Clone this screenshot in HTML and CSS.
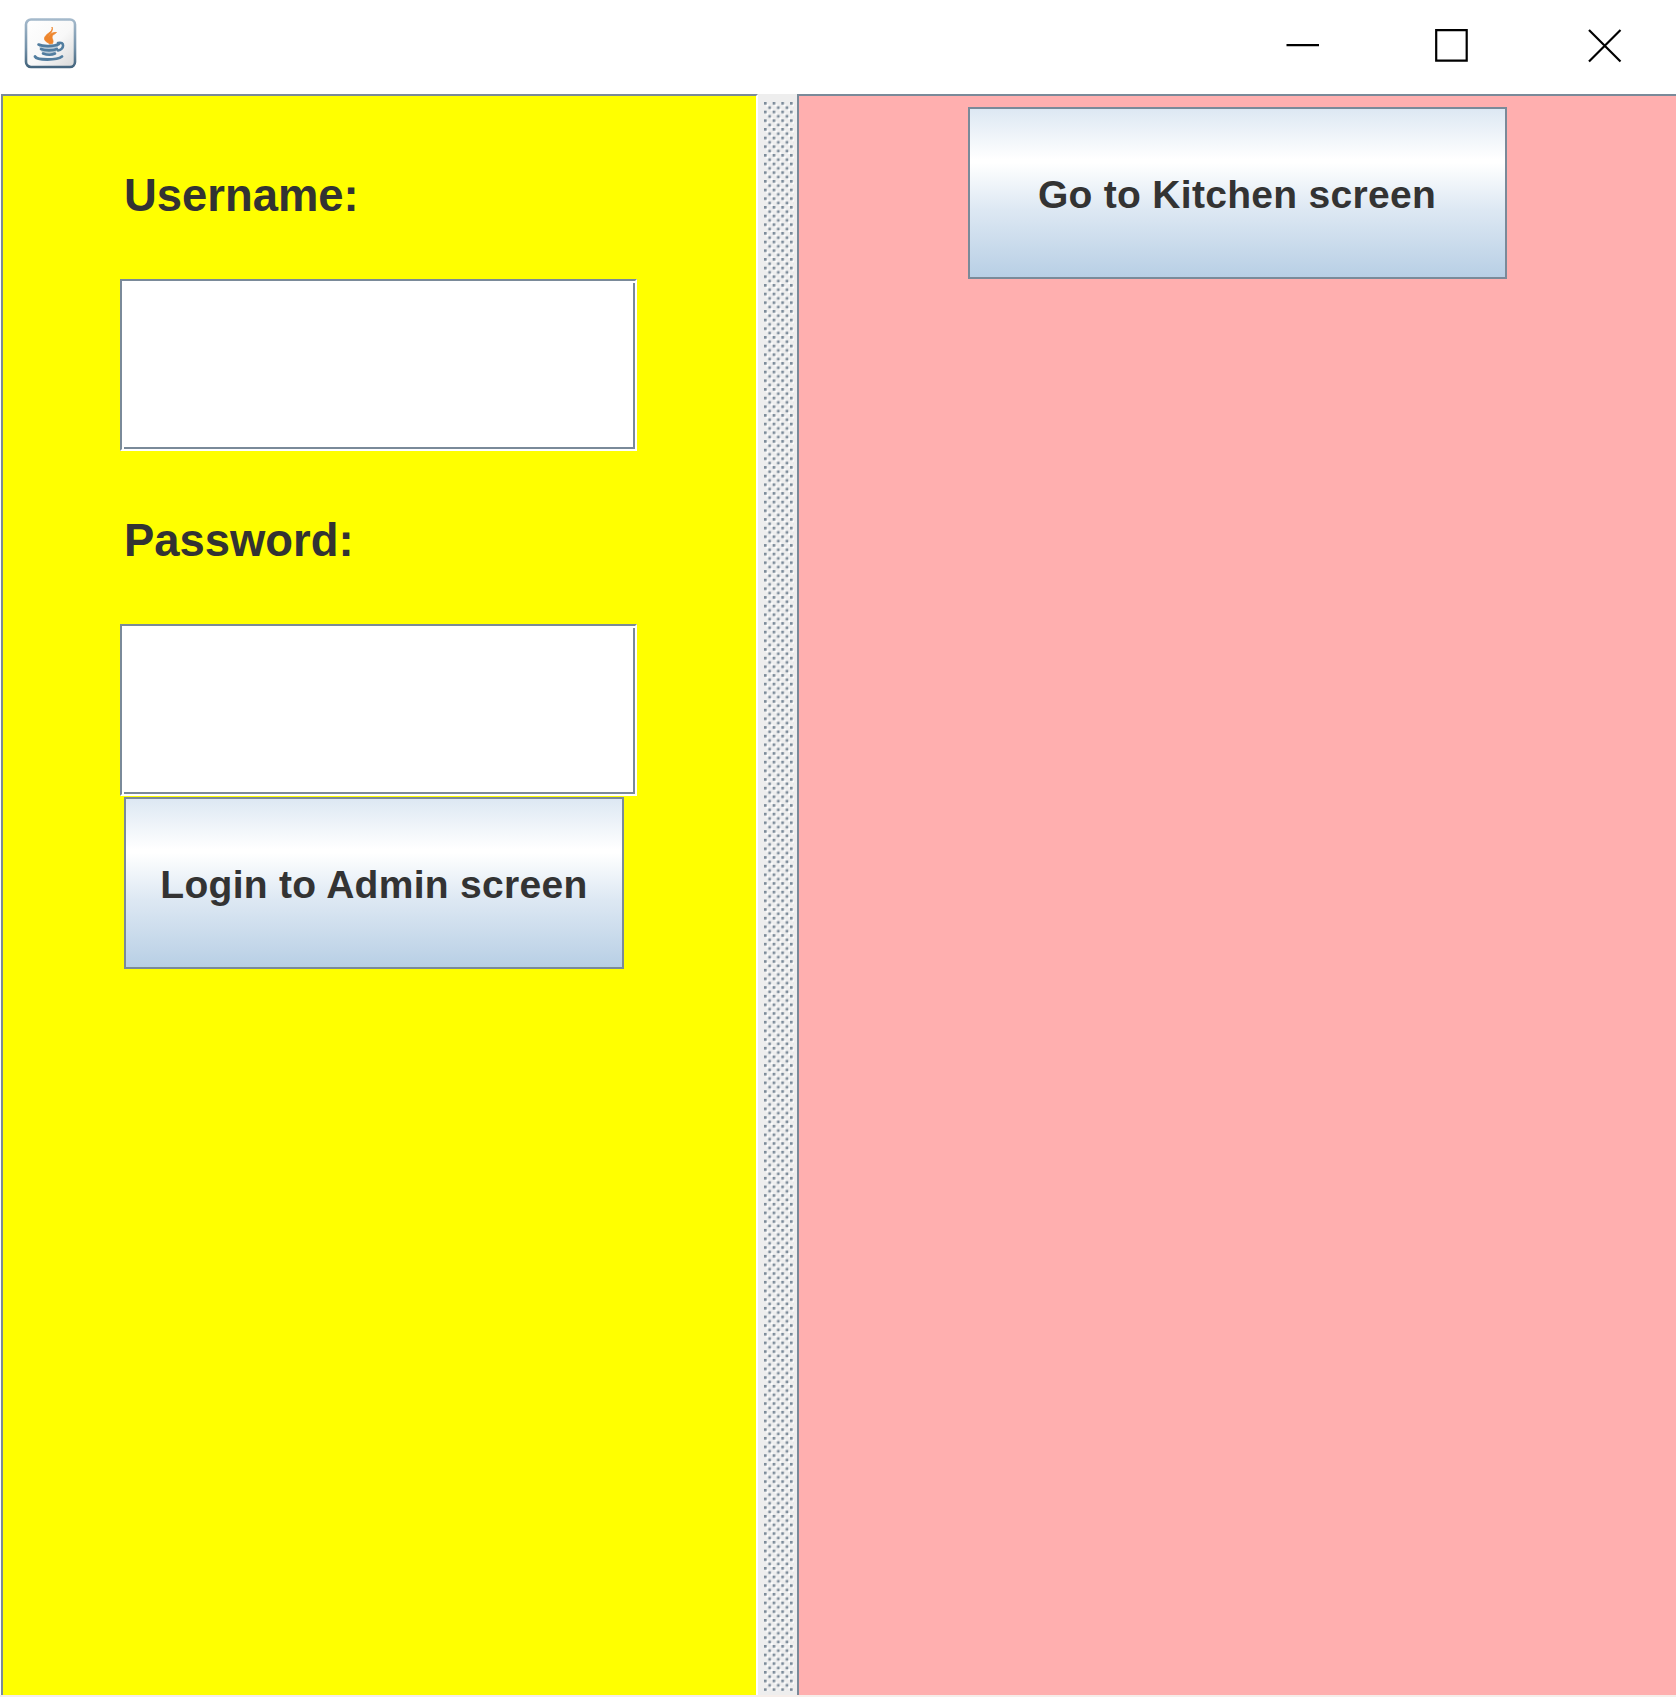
FILE: index.html
```html
<!DOCTYPE html>
<html lang="en">
<head>
<meta charset="utf-8">
<title>Login</title>
<link rel="stylesheet" href="styles.css">
</head>
<body>
<header class="titlebar">
  <svg class="app-icon" width="54" height="52" viewBox="0 0 54 52" aria-hidden="true">
    <defs>
      <linearGradient id="tile" x1="0" y1="0" x2="1" y2="1"><stop offset="0" stop-color="#fff"/><stop offset=".55" stop-color="#f8f8f8"/><stop offset="1" stop-color="#d8d8d8"/></linearGradient>
      <linearGradient id="edge" x1="0" y1="0" x2="0" y2="1"><stop offset="0" stop-color="#a4b9cb"/><stop offset=".6" stop-color="#7391a9"/><stop offset="1" stop-color="#45657d"/></linearGradient>
    </defs>
    <rect x="2" y="1.5" width="49" height="47.500" rx="5" fill="url(#tile)" stroke="url(#edge)" stroke-width="2.600"/>
    <path d="M28 9C30 14 20 16 20.500 21 21 24 24 24 25.500 26L28.500 25.500C30 23 28 21 28 19 28 17 31 16 32.500 14.500 28 14 25 16.500 24.500 20 23.500 17 30 14 28 9Z" fill="#ee852c" stroke="#ee852c" stroke-width=".8"/>
    <path d="M13.500 25.500C18 27.500 31 27.500 35 25.500L32.500 33C31.500 37.500 19 37.500 18 34.500Z" fill="#b9cad7"/>
    <g fill="none" stroke="#517d9f" stroke-linecap="round">
      <path d="M14.500 26.500C19 28.800 30 28.600 35 26M17 31C21 32.800 29 32.800 33 31M19 35.500C23 37 28 37 31 35.500" stroke-width="2.600"/>
      <path d="M34 25C41 23 40.500 31.500 34 32.500" stroke-width="2.600"/>
      <path d="M11 38.500C13 42.500 33 42.500 38 38.500" stroke-width="2.800"/>
    </g>
  </svg>
  <svg class="win-min" width="34" height="34" viewBox="0 0 34 34"><path d="M.5 16.200H33" /></svg>
  <svg class="win-max" width="34" height="34" viewBox="0 0 34 34"><path d="M1.200 1.200H31.700V31.700H1.200Z"/></svg>
  <svg class="win-close" width="34" height="34" viewBox="0 0 34 34"><path d="M1 1L32.500 32.500M32.500 1L1 32.500"/></svg>
</header>
<main class="split">
  <section class="pane pane-login">
    <label class="label" for="user">Username:</label>
    <div class="field"><input id="user" type="text"></div>
    <label class="label" for="pass">Password:</label>
    <div class="field"><input id="pass" type="password"></div>
    <button class="btn btn-login">Login to Admin screen</button>
  </section>
  <div class="divider">
    <svg width="30" height="1590" aria-hidden="true">
      <defs>
        <pattern id="bumps" width="8.6684" height="8.6684" patternUnits="userSpaceOnUse">
          <path d="M2.200 2.200h2.200v2.200h-2.200zM6.500 6.500h2.168v2.168h-2.168z" fill="#fff"/>
          <path d="M0 0h2.600v2.600H0zM4.334 4.334h2.600v2.600h-2.600z" fill="#7a8a99"/>
        </pattern>
      </defs>
      <rect width="30" height="1589" fill="url(#bumps)"/>
    </svg>
  </div>
  <section class="pane pane-kitchen">
    <button class="btn btn-kitchen">Go to Kitchen screen</button>
  </section>
</main>
</body>
</html>
```
FILE: styles.css
```css
* { box-sizing: border-box; }

body {
  margin: 0;
  width: 1676px;
  height: 1697px;
  overflow: hidden;
  background: #fff;
  color: #333;
  font-family: "Liberation Sans", Arial, sans-serif;
  font-weight: 700;
}

.titlebar {
  display: flex;
  height: 94px;
  padding-left: 24px;
}

.app-icon { margin-top: 18px; }

.win-min, .win-max, .win-close {
  margin-top: 29px;
  fill: none;
  stroke: #000;
  stroke-width: 2.2;
}
.win-min { margin-left: 1208px; }
.win-max { margin-left: 115px; }
.win-close { margin-left: 119px; }

.split {
  display: flex;
  height: 1603px;
  padding-left: 1px;
  border-bottom: 2px solid #f6eeea;
}

.pane {
  border-top: 2px solid #7a8a99;
  border-left: 2px solid #7a8a99;
}

.pane-login {
  display: flex;
  flex-direction: column;
  align-items: flex-start;
  width: 757px;
  padding: 14px 0 0 117px;
  border-right: 2px solid #fff;
  background: #ff0;
}

.label {
  height: 169px;
  padding: 1px 0 0 4px;
  font-size: 45.4px;
  line-height: 169px;
}

.field {
  width: 517px;
  height: 172px;
  background: #fff;
  border-top: 2px solid #7a8a99;
  border-left: 2px solid #7a8a99;
  border-right: 2px solid #fff;
  border-bottom: 2px solid #fff;
}

.field + .label {
  height: 173px;
  padding-top: 3px;
  line-height: 173px;
}

.field input {
  display: block;
  width: 511px;
  height: 166px;
  margin: 2px 0 0 2px;
  padding: 0;
  border: 0 solid #7a8a99;
  border-right-width: 2px;
  border-bottom-width: 2px;
  outline: 0;
  font: inherit;
}

.btn {
  height: 172px;
  padding: 4px 0 0;
  border: 2px solid #7a8a99;
  border-radius: 0;
  background: linear-gradient(#dde8f3, #fff 30%, #fff 32%, #dde8f3 60%, #b8cfe5);
  color: #333;
  font: 700 39px "Liberation Sans", Arial, sans-serif;
  letter-spacing: .3px;
}

.btn-login {
  width: 500px;
  margin: 1px 0 0 4px;
}

.divider {
  width: 39px;
  padding: 8px 0 0 6.300px;
  background: #eee;
}

.divider svg { display: block; }

.pane-kitchen {
  flex: 1;
  padding: 11px 0 0 168.500px;
  background: #ffafaf;
}

.btn-kitchen { width: 539px; }
```
